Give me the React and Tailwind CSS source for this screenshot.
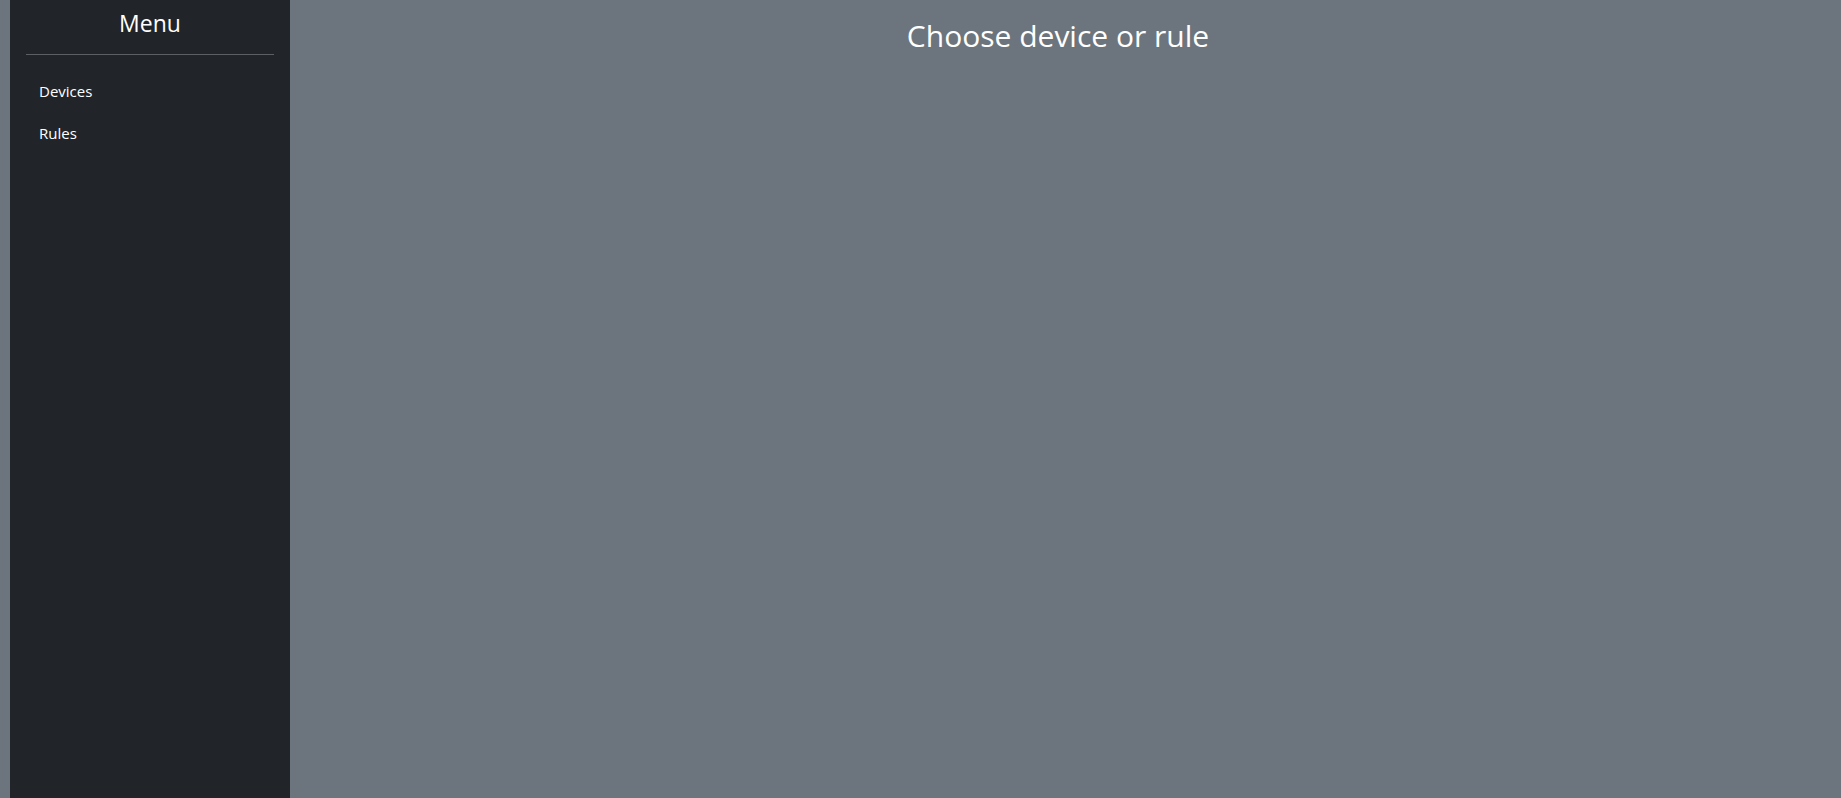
import React from "react";

const links = ["Devices", "Rules"];

const App = () => {
  return (
    <div
      className="flex h-[798px] w-full bg-[#6c757d] text-white"
      style={{ fontFamily: '"Segoe UI", "Open Sans", "Noto Sans", sans-serif' }}
    >
      {/* Sidebar */}
      <aside className="ml-[10px] flex h-full w-[280px] shrink-0 flex-col bg-[#212529]">
        <h4 className="pt-[6px] text-center text-[23px] leading-[34px]">Menu</h4>
        <hr className="mx-4 mt-[14px] border-t border-[#5c5f63]" />
        <nav className="mt-[15px] flex flex-col">
          {links.map((link) => (
            <a
              key={link}
              href="#"
              className="px-[29px] py-[9px] text-[15px] leading-[24px] text-white"
            >
              {link}
            </a>
          ))}
        </nav>
      </aside>

      {/* Main */}
      <main className="flex-1 pr-[15px]">
        <h3 className="pt-[14px] text-center text-[30px] leading-[44px]">Choose device or rule</h3>
      </main>
    </div>
  );
};

export default App;
